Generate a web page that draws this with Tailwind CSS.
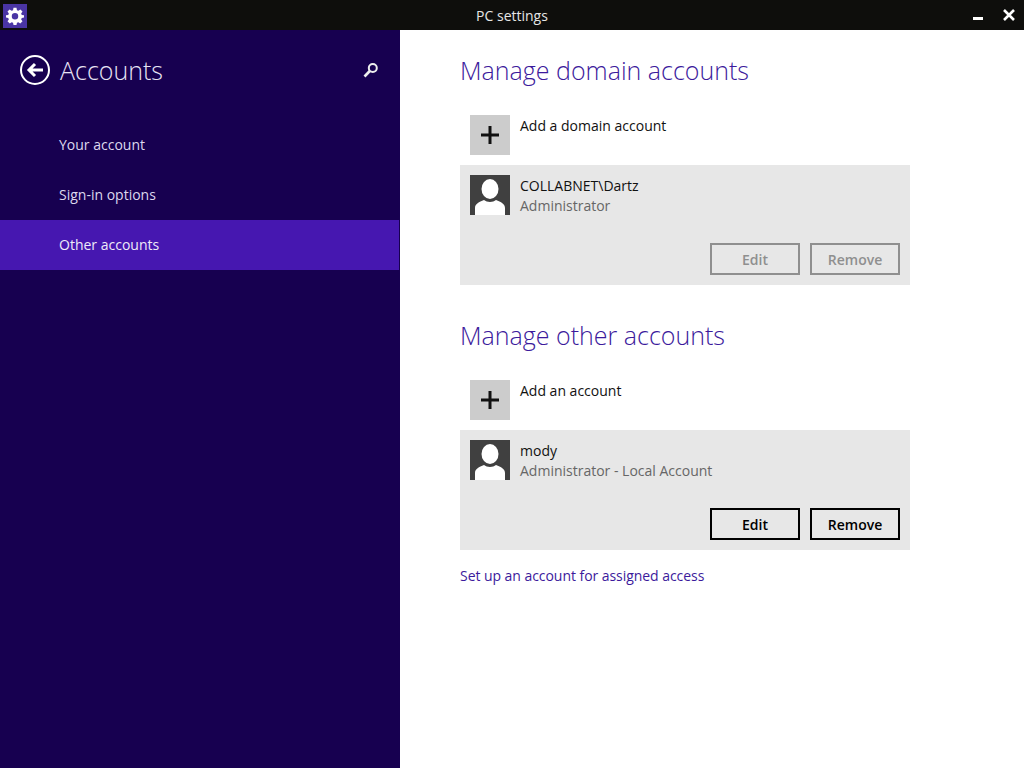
<!DOCTYPE html>
<html lang="en">
<head>
	<meta charset="UTF-8">
	<title>PC settings</title>
	<script src="https://cdn.jsdelivr.net/npm/@tailwindcss/browser@4"></script>
</head>
<body class="w-[1024px] h-[768px] overflow-hidden bg-white font-['Open_Sans',sans-serif]">
	<!-- title bar -->
	<div class="h-[30px] bg-[#0e0e0c] flex items-center relative">
		<div class="w-[24px] h-[24px] ml-[3px] mt-[1px] bg-[#4a35a4] flex items-center justify-center">
			<svg width="18" height="18" viewBox="0 0 24 24" fill="#fff">
				<path fill-rule="evenodd" d="M10 1h4l.6 3.2 1.9.8L19.2 3.2 22 6l-1.800 2.700.8 1.900L24 11v3l-3 .6-.8 1.900L22 19l-3 3-2.500-1.800-1.900.8L14 24h-4l-.6-3-1.900-.8L5 22l-3-3 1.800-2.500-.8-1.900L0 14v-3l3-.4.8-1.900L2 6l2.800-2.800L7.500 5l1.900-.8zM12 8a4.300 4.300 0 1 0 0 8.600A4.300 4.300 0 0 0 12 8z"/>
			</svg>
		</div>
		<div class="absolute left-0 right-0 top-0 h-[30px] flex items-center justify-center text-[14px] text-[#e6e6e6]">PC settings</div>
		<div class="ml-auto flex items-center">
			<div class="w-[10px] h-[3px] bg-white mr-[20px] mt-[7px]"></div>
			<svg class="mr-[9px]" width="12" height="12" viewBox="0 0 12 12" stroke="#fff" stroke-width="2.600"><path d="M1 1l10 10M11 1L1 11"/></svg>
		</div>
	</div>
	<div class="flex h-[738px]">
		<!-- sidebar -->
		<div class="w-[400px] bg-[#170050] text-white">
			<div class="h-[80px] flex items-center pl-[20px] pr-[21px]">
				<svg width="30" height="30" viewBox="0 0 30 30" fill="none" stroke="#fff">
					<circle cx="15" cy="15" r="14" stroke-width="2"/>
					<path d="M23 15H9M15 9l-6 6 6 6" stroke-width="3"/>
				</svg>
				<span class="ml-[10px] text-[25px] font-light text-[#e8e4f5] relative top-[1px]">Accounts</span>
				<svg class="ml-auto" width="16" height="16" viewBox="0 0 16 16" fill="none" stroke="#eee">
					<circle cx="9.800" cy="6" r="4" stroke-width="2"/>
					<path d="M6.800 9L1.500 14.500" stroke-width="2.600"/>
				</svg>
			</div>
			<div class="mt-[10px]">
				<div class="h-[50px] flex items-center pl-[59px] pb-[2px] text-[14px] text-[#ddd8ee]">Your account</div>
				<div class="h-[50px] flex items-center pl-[59px] pb-[2px] text-[14px] text-[#ddd8ee]">Sign-in options</div>
				<div class="h-[50px] w-[399px] flex items-center pl-[59px] pb-[2px] text-[14px] text-[#eeeaf8] bg-[#4617b0]">Other accounts</div>
			</div>
		</div>
		<!-- content -->
		<div class="flex-1 pl-[60px] w-[450px]">
			<div class="w-[450px]">
				<h2 class="h-[80px] pt-[2px] flex items-center text-[25px] font-light text-[#3c1a9c]">Manage domain accounts</h2>
				<div class="flex pl-[10px] h-[55px] pt-[5px]">
					<div class="w-[40px] h-[40px] bg-[#cccccc] flex items-center justify-center">
						<svg width="18" height="18" viewBox="0 0 18 18" fill="#111"><path d="M7.500 0h3v7.500H18v3h-7.500V18h-3v-7.500H0v-3h7.500z"/></svg>
					</div>
					<span class="ml-[10px] text-[14px] leading-[22px] text-[#111]">Add a domain account</span>
				</div>
				<div class="h-[120px] bg-[#e7e7e7] p-[10px] flex flex-col">
					<div class="flex">
						<div class="w-[40px] h-[40px] bg-[#404040] overflow-hidden">
							<svg width="40" height="40" viewBox="0 0 40 40" fill="#fff"><ellipse cx="20" cy="14" rx="8.500" ry="10"/><path d="M5 40v-7c0-4 4-6 9-8 3 2.500 9 2.500 12 0 5 2 9 4 9 8v7z"/></svg>
						</div>
						<div class="ml-[10px] pt-[1px]">
							<div class="text-[14px] leading-[20px] text-[#111]">COLLABNET\Dartz</div>
							<div class="text-[14px] leading-[20px] text-[#666]">Administrator</div>
						</div>
					</div>
					<div class="mt-auto flex justify-end gap-[10px]">
						<div class="w-[90px] h-[32px] border-2 border-[#8f8f8f] flex items-center justify-center text-[14px] font-semibold text-[#8f8f8f]">Edit</div>
						<div class="w-[90px] h-[32px] border-2 border-[#8f8f8f] flex items-center justify-center text-[14px] font-semibold text-[#8f8f8f]">Remove</div>
					</div>
				</div>
				<h2 class="h-[80px] pt-[22px] flex items-center text-[25px] font-light text-[#3c1a9c]">Manage other accounts</h2>
				<div class="flex pl-[10px] h-[65px] pt-[15px]">
					<div class="w-[40px] h-[40px] bg-[#cccccc] flex items-center justify-center">
						<svg width="18" height="18" viewBox="0 0 18 18" fill="#111"><path d="M7.500 0h3v7.500H18v3h-7.500V18h-3v-7.500H0v-3h7.500z"/></svg>
					</div>
					<span class="ml-[10px] text-[14px] leading-[22px] text-[#111]">Add an account</span>
				</div>
				<div class="h-[120px] bg-[#e7e7e7] p-[10px] flex flex-col">
					<div class="flex">
						<div class="w-[40px] h-[40px] bg-[#404040] overflow-hidden">
							<svg width="40" height="40" viewBox="0 0 40 40" fill="#fff"><ellipse cx="20" cy="14" rx="8.500" ry="10"/><path d="M5 40v-7c0-4 4-6 9-8 3 2.500 9 2.500 12 0 5 2 9 4 9 8v7z"/></svg>
						</div>
						<div class="ml-[10px] pt-[1px]">
							<div class="text-[14px] leading-[20px] text-[#111]">mody</div>
							<div class="text-[14px] leading-[20px] text-[#666]">Administrator - Local Account</div>
						</div>
					</div>
					<div class="mt-auto flex justify-end gap-[10px]">
						<div class="w-[90px] h-[32px] border-2 border-black flex items-center justify-center text-[14px] font-semibold text-black">Edit</div>
						<div class="w-[90px] h-[32px] border-2 border-black flex items-center justify-center text-[14px] font-semibold text-black">Remove</div>
					</div>
				</div>
				<div class="mt-[16px] text-[14px] leading-[20px] tracking-[-0.05px] text-[#3c1a9c]">Set up an account for assigned access</div>
			</div>
		</div>
	</div>
</body>
</html>
